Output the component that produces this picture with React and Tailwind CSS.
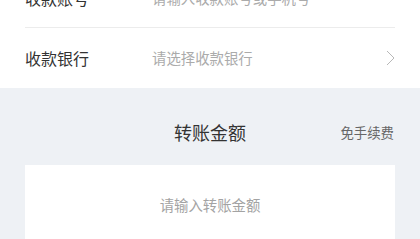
import React from "react";

const font = { fontFamily: '"Noto Sans CJK SC", "Noto Sans", sans-serif' };

function Row({ label, placeholder, chevron, divider }) {
  return (
    <div className="mx-[25px] h-[60px] flex items-center border-b border-[#ececec]" style={divider ? {} : { borderBottomWidth: 0 }}>
      <div className="w-[127px] text-[16px] leading-[22px] text-[#333333] shrink-0">{label}</div>
      <div className="flex-1 text-[14.4px] leading-[20px] text-[#ababab] whitespace-nowrap">{placeholder}</div>
      {chevron && (
        <svg width="9" height="16" viewBox="0 0 9 16" className="shrink-0 mr-[0px]">
          <path d="M1 1 L8 8 L1 15" fill="none" stroke="#b8b8b8" strokeWidth="1" />
        </svg>
      )}
    </div>
  );
}

export default function App() {
  return (
    <div className="w-[420px] h-[239px] overflow-hidden bg-[#eef1f5]" style={font}>
      <div className="bg-white -mt-[32px]">
        <Row label="收款账号" placeholder="请输入收款账号或手机号" divider />
        <Row label="收款银行" placeholder="请选择收款银行" chevron />
      </div>
      <div className="relative h-[77px] pt-[32px]">
        <div className="text-center text-[18px] leading-[24px] text-[#333333]">转账金额</div>
        <div className="absolute right-[26px] top-[33px] text-[13.4px] leading-[22px] text-[#666666]">免手续费</div>
      </div>
      <div className="mx-[25px] bg-white h-[120px] pt-[30px] text-center text-[14.4px] leading-[20px] text-[#a3a3a3]">
        请输入转账金额
      </div>
    </div>
  );
}
